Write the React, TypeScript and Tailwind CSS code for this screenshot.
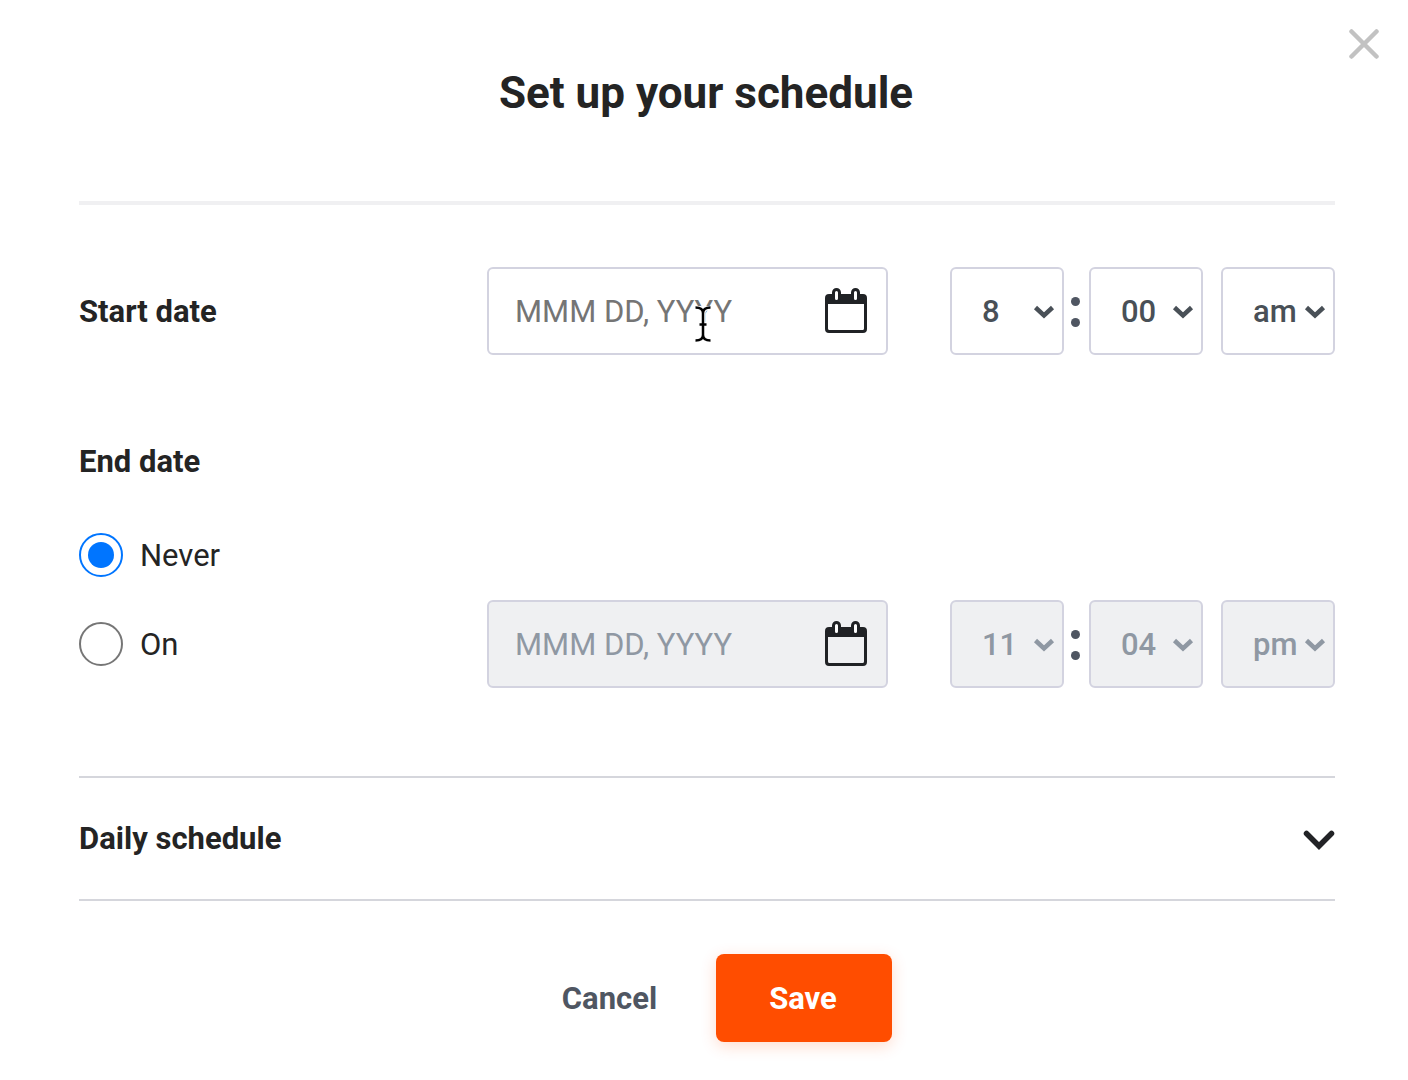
import { useState } from "react";

function CalendarIcon() {
  return (
    <svg viewBox="0 0 42 45" className="h-[45px] w-[42px]" aria-hidden="true">
      <path
        d="M4 6H38Q42 6 42 10V41Q42 45 38 45H4Q0 45 0 41V10Q0 6 4 6ZM3 16V40.500Q3 42 4.500 42H37.500Q39 42 39 40.500V16Z"
        fill="#202225"
        fillRule="evenodd"
      />
      <rect x="8.500" y="1.500" width="6" height="12" rx="3" className="fill-white" stroke="#202225" strokeWidth="3" />
      <rect x="27.500" y="1.500" width="6" height="12" rx="3" className="fill-white" stroke="#202225" strokeWidth="3" />
    </svg>
  );
}

function DateField({ label, disabled = false }: { label: string; disabled?: boolean }) {
  return (
    <div
      className={`flex h-22 w-[401px] items-center rounded-md border-2 border-[#d3d3e0] pr-[19px] ${
        disabled ? "bg-[#eff0f2]" : "bg-white"
      }`}
    >
      <input
        type="text"
        aria-label={label}
        placeholder="MMM DD, YYYY"
        disabled={disabled}
        className={`h-full min-w-0 flex-1 bg-transparent pl-[26px] text-[31px] outline-none ${
          disabled ? "placeholder:text-[#8f98a3]" : "placeholder:text-[#757575]"
        }`}
      />
      <button type="button" aria-label={`Open ${label} calendar`} disabled={disabled} className="pb-0.5">
        <CalendarIcon />
      </button>
    </div>
  );
}

function TimeSelect({
  label,
  options,
  disabled = false,
}: {
  label: string;
  options: string[];
  disabled?: boolean;
}) {
  return (
    <div className={`relative h-22 w-[114px] ${disabled ? "text-[#8f98a3]" : "text-[#495057]"}`}>
      <select
        aria-label={label}
        disabled={disabled}
        defaultValue={options[0]}
        className={`h-full w-full appearance-none rounded-md border-2 border-[#d3d3e0] pt-0.5 pl-[30px] text-[31px] font-medium opacity-100 outline-none ${
          disabled ? "bg-[#eff0f2]" : "bg-white"
        }`}
      >
        {options.map((o) => (
          <option key={o}>{o}</option>
        ))}
      </select>
      <svg
        viewBox="0 0 22 14"
        className="pointer-events-none absolute top-[38px] right-[9px] h-[14px] w-[22px]"
        aria-hidden="true"
      >
        <path d="M2.500 2.500L11 10.500L19.500 2.500" fill="none" stroke="currentColor" strokeWidth="4.500" />
      </svg>
    </div>
  );
}

function TimeFields({
  name,
  hours,
  minutes,
  periods,
  disabled,
}: {
  name: string;
  hours: string[];
  minutes: string[];
  periods: string[];
  disabled?: boolean;
}) {
  return (
    <div className="ml-[62px] flex items-center">
      <TimeSelect label={`${name} hour`} options={hours} disabled={disabled} />
      <div className="flex w-[25px] flex-col items-center gap-3 pt-0.5 pr-0.5" aria-hidden="true">
        <span className="h-[9px] w-[9px] rounded-full bg-[#4f5662]" />
        <span className="h-[9px] w-[9px] rounded-full bg-[#4f5662]" />
      </div>
      <TimeSelect label={`${name} minutes`} options={minutes} disabled={disabled} />
      <div className="w-[18px]" />
      <TimeSelect label={`${name} period`} options={periods} disabled={disabled} />
    </div>
  );
}

function RadioOption({
  label,
  checked,
  onChange,
}: {
  label: string;
  checked: boolean;
  onChange: () => void;
}) {
  return (
    <label className="flex items-center gap-[17px] text-[31px] leading-[42px] text-[#242424]">
      <input
        type="radio"
        name="end-date"
        checked={checked}
        onChange={onChange}
        className="grid h-11 w-11 appearance-none place-content-center rounded-full border-2 border-[#767676] bg-white before:h-[26px] before:w-[26px] before:rounded-full checked:border-[#0075ff] checked:before:bg-[#0075ff]"
      />
      <span className="pt-0.5">{label}</span>
    </label>
  );
}

export default function App() {
  const [end, setEnd] = useState("never");
  return (
    <div
      role="dialog"
      aria-labelledby="title"
      className="relative bg-white pr-[73px] pb-9 pl-[79px] font-['Roboto',sans-serif] text-[#242424]"
    >
      <button type="button" aria-label="Close" className="absolute top-[29px] right-[29px]">
        <svg viewBox="0 0 30 30" className="h-[30px] w-[30px]" aria-hidden="true">
          <path d="M2.500 2.500L27.500 27.500M27.500 2.500L2.500 27.500" stroke="#c2c2c2" strokeWidth="4.500" strokeLinecap="round" />
        </svg>
      </button>

      <header className="border-b-4 border-[#f0f0f2] pt-[63px] pb-[78px]">
        <h1 id="title" className="pr-0.5 text-center text-[44px] leading-[60px] font-bold">
          Set up your schedule
        </h1>
      </header>

      <section className="flex items-center pt-[62px]">
        <h2 className="flex-1 pt-0.5 text-[31px] leading-[40px] font-bold">Start date</h2>
        <div className="relative">
          <DateField label="Start date" />
          <svg
            viewBox="0 0 18 36"
            className="pointer-events-none absolute top-[39px] left-[207px] h-[36px] w-[18px]"
            aria-hidden="true"
          >
            <path
              d="M1.500 1.500Q9 1.500 9 7Q9 1.500 16.500 1.500M9 6V30M1.500 34.500Q9 34.500 9 29Q9 34.500 16.500 34.500M5.500 18.500H12.500"
              fill="none"
              stroke="#fff"
              strokeWidth="5"
            />
            <path
              d="M1.500 1.500Q9 1.500 9 7Q9 1.500 16.500 1.500M9 6V30M1.500 34.500Q9 34.500 9 29Q9 34.500 16.500 34.500M5.500 18.500H12.500"
              fill="none"
              stroke="#000"
              strokeWidth="2.500"
            />
          </svg>
        </div>
        <TimeFields name="Start" hours={["8", "9", "10"]} minutes={["00", "15", "30", "45"]} periods={["am", "pm"]} />
      </section>

      <section className="pt-[87px] pb-22">
        <h2 className="text-[31px] leading-[40px] font-bold">End date</h2>
        <div className="pt-[51px]">
          <RadioOption label="Never" checked={end === "never"} onChange={() => setEnd("never")} />
        </div>
        <div className="flex items-center pt-[23px]">
          <div className="flex-1">
            <RadioOption label="On" checked={end === "on"} onChange={() => setEnd("on")} />
          </div>
          <DateField label="End date" disabled={end === "never"} />
          <TimeFields
            name="End"
            hours={["11", "12"]}
            minutes={["04", "15", "30", "45"]}
            periods={["pm", "am"]}
            disabled={end === "never"}
          />
        </div>
      </section>

      <section className="border-y-2 border-[#d5d6dc]">
        <button type="button" className="flex h-[121px] w-full items-center justify-between pt-0.5 text-[31px] font-bold">
          Daily schedule
          <svg viewBox="0 0 32 20" className="h-5 w-8" aria-hidden="true">
            <path
              d="M3.500 3.500L16 16L28.500 3.500"
              fill="none"
              stroke="#222326"
              strokeWidth="5.500"
              strokeLinecap="round"
            />
          </svg>
        </button>
      </section>

      <footer className="flex justify-center pt-[53px] pr-[9px]">
        <button type="button" className="h-22 w-[177px] pt-0.5 pl-4 text-[31px] font-bold text-[#4f5662]">
          Cancel
        </button>
        <button
          type="button"
          className="ml-[26px] h-22 w-44 rounded-lg bg-[#ff4d00] pt-0.5 pr-0.5 text-[31px] font-bold text-white shadow-[0_4px_16px_rgba(255,77,0,0.2)]"
        >
          Save
        </button>
      </footer>
    </div>
  );
}
